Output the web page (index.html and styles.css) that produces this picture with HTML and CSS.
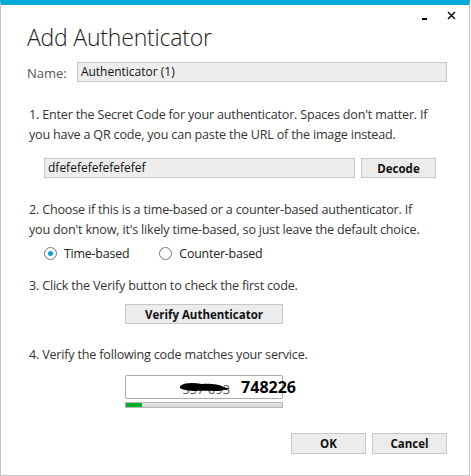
FILE: index.html
```html
<!DOCTYPE html>
<html lang="en">
<head>
  <meta charset="UTF-8">
  <title>Add Authenticator</title>
  <link rel="stylesheet" href="styles.css">
</head>
<body>
  <div class="window">
    <div class="caption">
      <span class="btn-min"></span>
      <svg class="btn-close" width="9" height="9" viewBox="0 0 9 9">
        <path d="M1 1 L8 8 M8 1 L1 8" stroke="#000" stroke-width="1.4" fill="none" />
      </svg>
    </div>

    <div class="content">
      <h1>Add Authenticator</h1>

      <div class="name-row">
        <label class="name-label">Name:</label>
        <div class="field name-field">Authenticator (1)</div>
      </div>

      <p class="step step-1">1. Enter the Secret Code for your authenticator. Spaces don't matter. If<br>you have a QR code, you can paste the URL of the image instead.</p>
      <div class="secret-row">
        <div class="field secret-field">dfefefefefefefefef</div>
        <button class="button">Decode</button>
      </div>

      <p class="step">2. Choose if this is a time-based or a counter-based authenticator. If<br>you don't know, it's likely time-based, so just leave the default choice.</p>
      <div class="radio-row">
        <span class="radio checked"></span><span class="radio-label">Time-based</span>
        <span class="radio"></span><span class="radio-label">Counter-based</span>
      </div>

      <p class="step step-3">3. Click the Verify button to check the first code.</p>
      <div class="inset-col">
        <button class="button verify">Verify Authenticator</button>
      </div>

      <p class="step step-4">4. Verify the following code matches your service.</p>
      <div class="inset-col">
        <div class="code-box">
          <span class="old-code">557 693<svg class="scribble" width="50" height="12" viewBox="0 0 50 12"><path d="M0 5 C6 1 14 2 22 3 C30 2 38 3 44 6 L50 8 L44 9 C36 11 26 9 16 10 C8 10 3 9 0 7 Z" fill="#000" /></svg></span>
          <span class="new-code">748226</span>
        </div>
        <div class="progress"><div class="progress-fill" style="width: 10%"></div></div>
      </div>

      <div class="footer">
        <button class="button footer-btn">OK</button>
        <button class="button footer-btn">Cancel</button>
      </div>
    </div>
  </div>
</body>
</html>
```

FILE: styles.css
```css
body {
  margin: 0;
  background: #fff;
  font-family: 'Open Sans', 'Noto Sans', sans-serif;
  color: #333;
}
.window {
  width: 470px;
  height: 476px;
  box-sizing: border-box;
  border-top: 5px solid #00a9d7;
  border-left: 1px solid #c4c4c4;
  border-right: 1px solid #c4c4c4;
  border-bottom: 1px solid #c4c4c4;
  background: #fff;
}
.caption {
  display: flex;
  justify-content: flex-end;
  align-items: flex-start;
  height: 17px;
  padding-right: 13px;
}
.btn-min {
  width: 5px;
  height: 2px;
  background: #000;
  margin-top: 13px;
  margin-right: 20px;
}
.btn-close {
  margin-top: 6px;
}
.content {
  padding-left: 26px;
  padding-right: 22px;
}
h1 {
  margin: 0;
  font-weight: 300;
  font-size: 23px;
  line-height: 30px;
  color: #222;
  letter-spacing: -0.2px;
}
.name-row {
  display: flex;
  align-items: center;
  margin-top: 9px;
}
.name-label {
  width: 50px;
  font-size: 13px;
  color: #555;
  padding-top: 3px;
}
.field {
  box-sizing: border-box;
  height: 20px;
  background: #ededed;
  border: 1px solid #c6c6c6;
  font-size: 12px;
  line-height: 18px;
  padding-left: 3px;
  color: #111;
}
.name-field {
  width: 371px;
}
.step {
  margin: 0;
  font-size: 12.6px;
  line-height: 20px;
  color: #333;
  padding-left: 2px;
  letter-spacing: -0.2px;
}
.step-1 {
  margin-top: 23px;
}
.secret-row {
  display: flex;
  gap: 6px;
  margin-left: 17px;
  margin-top: 13px;
  margin-bottom: 22px;
}
.secret-field {
  width: 311px;
}
.button {
  box-sizing: border-box;
  height: 20px;
  background: #ececec;
  border: 1px solid #c8c8c8;
  font-family: 'Open Sans', 'Noto Sans', sans-serif;
  font-weight: 700;
  font-size: 11.5px;
  color: #111;
  padding: 0;
}
.secret-row .button {
  width: 75px;
}
.radio-row {
  display: flex;
  align-items: center;
  margin-left: 17px;
  margin-top: 4px;
  height: 18px;
}
.radio {
  flex: none;
  box-sizing: border-box;
  width: 13px;
  height: 13px;
  border: 1px solid #777;
  border-radius: 50%;
  display: flex;
  align-items: center;
  justify-content: center;
}
.radio.checked::after {
  content: "";
  width: 5px;
  height: 5px;
  border-radius: 50%;
  background: #0a9bd8;
}
.radio-label {
  font-size: 12.4px;
  letter-spacing: -0.2px;
  color: #222;
  margin-left: 7px;
  margin-right: 30px;
}
.step-3 {
  margin-top: 14px;
}
.inset-col {
  display: flex;
  flex-direction: column;
  align-items: flex-start;
  margin-left: 98px;
}
.verify {
  width: 158px;
  margin-top: 8px;
}
.step-4 {
  margin-top: 21px;
}
.code-box {
  box-sizing: border-box;
  width: 158px;
  height: 24px;
  border: 1px solid #aaa;
  border-radius: 2px;
  margin-top: 10px;
  display: flex;
  align-items: center;
  justify-content: flex-end;
  white-space: nowrap;
}
.old-code {
  position: relative;
  font-size: 13px;
  color: #555;
  margin-right: 11px;
  padding-top: 4px;
}
.scribble {
  position: absolute;
  left: -2px;
  top: 5px;
}
.new-code {
  font-weight: 700;
  font-size: 16px;
  color: #000;
  margin-right: -14px;
}
.progress {
  box-sizing: border-box;
  width: 158px;
  height: 6px;
  margin-top: 3px;
  border: 1px solid #b8b8b8;
  background: linear-gradient(#e6e6e6, #d4d4d4);
}
.progress-fill {
  height: 100%;
  background: #06b025;
}
.footer {
  display: flex;
  justify-content: flex-end;
  gap: 6px;
  margin-top: 25px;
}
.footer-btn {
  width: 75px;
  height: 21px;
}
```
